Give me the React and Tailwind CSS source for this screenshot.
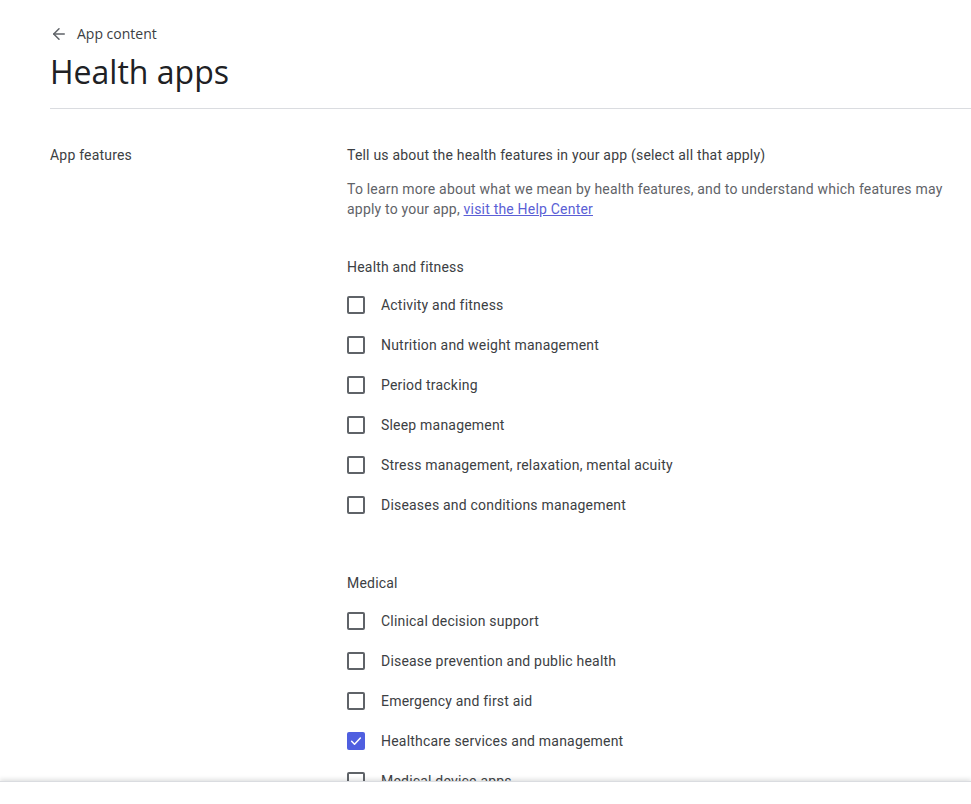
import { ArrowLeft } from "lucide-react";

const healthFitness = [
  { label: "Activity and fitness", checked: false },
  { label: "Nutrition and weight management", checked: false },
  { label: "Period tracking", checked: false },
  { label: "Sleep management", checked: false },
  { label: "Stress management, relaxation, mental acuity", checked: false },
  { label: "Diseases and conditions management", checked: false },
];

const medical = [
  { label: "Clinical decision support", checked: false },
  { label: "Disease prevention and public health", checked: false },
  { label: "Emergency and first aid", checked: false },
  { label: "Healthcare services and management", checked: true },
  { label: "Medical device apps", checked: false },
];

function Checkbox({ checked }) {
  if (checked) {
    return (
      <span className="w-[18px] h-[18px] rounded-[2px] bg-[#4f5fe0] flex items-center justify-center shrink-0">
        <svg width="14" height="14" viewBox="0 0 24 24" fill="none">
          <path d="M4.5 12.5l5 5L19.5 7" stroke="white" strokeWidth="2.6" strokeLinecap="round" strokeLinejoin="round" />
        </svg>
      </span>
    );
  }
  return <span className="w-[18px] h-[18px] rounded-[2px] border-2 border-[#5f6368] shrink-0"></span>;
}

function Group({ title, items }) {
  return (
    <div>
      <p className="text-[14px] leading-5 tracking-[0.2px] text-[#3c4043]">{title}</p>
      <ul className="mt-2">
        {items.map((item) => (
          <li key={item.label} className="h-10 flex items-center gap-4">
            <Checkbox checked={item.checked} />
            <span className="text-[14px] tracking-[0.2px] text-[#3c4043]">{item.label}</span>
          </li>
        ))}
      </ul>
    </div>
  );
}

export default function App() {
  return (
    <div className="h-[804px] w-full flex flex-col bg-white overflow-hidden" style={{ fontFamily: "Roboto, 'Liberation Sans', sans-serif" }}>
      <div className="flex-1 overflow-hidden">
        {/* HEADER */}
        <div className="pl-[50px]">
          <div className="pt-[24px] flex items-center gap-[9px] text-[#5f6368]">
            <ArrowLeft size={18} strokeWidth={2} />
            <span className="text-[14px] leading-5 text-[#3c4043]" style={{ fontFamily: "'Open Sans', Roboto, sans-serif" }}>App content</span>
          </div>
          <h1 className="mt-[6px] text-[32px] leading-[44px] text-[#202124]" style={{ fontFamily: "'Open Sans', Roboto, sans-serif" }}>
            Health apps
          </h1>
          <div className="mt-[14px] border-t border-[#dadce0]"></div>
        </div>

        {/* CONTENT */}
        <div className="pl-[50px] pt-[36px] flex">
          <div className="w-[297px] shrink-0">
            <p className="text-[14px] leading-5 tracking-[0.2px] text-[#3c4043]">App features</p>
          </div>
          <div className="flex-1 pr-6">
            <p className="text-[14px] leading-5 tracking-[0.2px] text-[#3c4043]">
              Tell us about the health features in your app (select all that apply)
            </p>
            <p className="mt-[14px] text-[14px] leading-5 tracking-[0.2px] text-[#5f6368]">
              To learn more about what we mean by health features, and to understand which features may apply to your app,{" "}
              <a href="#" className="text-[#5b5fd6] underline">visit the Help Center</a>
            </p>
            <div className="mt-[38px]">
              <Group title="Health and fitness" items={healthFitness} />
            </div>
            <div className="mt-[48px]">
              <Group title="Medical" items={medical} />
            </div>
          </div>
        </div>
      </div>

      {/* FOOTER */}
      <div className="h-[23px] shrink-0 bg-white border-t border-[#dadce0] shadow-[0_-2px_4px_rgba(60,64,67,0.15)]"></div>
    </div>
  );
}
